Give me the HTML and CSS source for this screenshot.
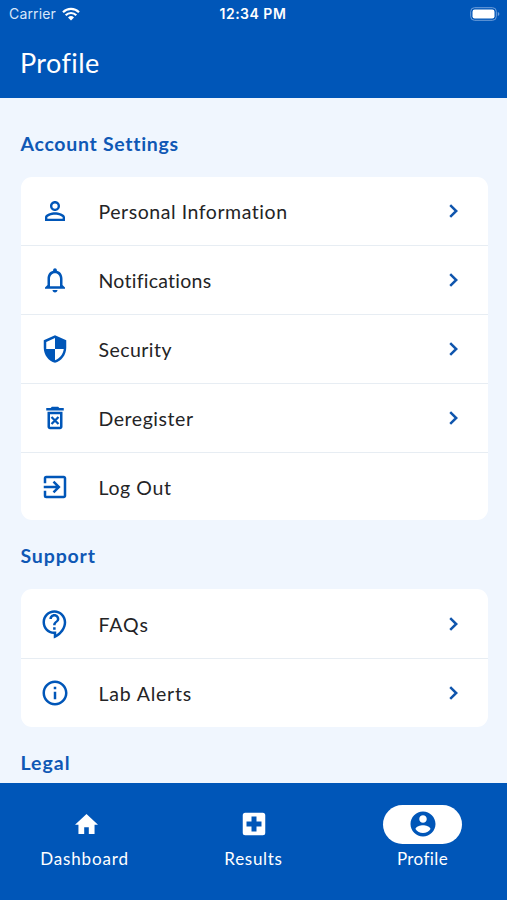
FILE: index.html
```html
<!DOCTYPE html>
<html lang="en">
<head>
<meta charset="utf-8">
<title>Profile</title>
<link rel="stylesheet" href="styles.css">
</head>
<body>
<svg class="defs" width="0" height="0">
  <symbol id="chevron" viewBox="0 0 12 16"><path d="M2.2 2.2 8.2 8l-6 5.8" fill="none" stroke="currentColor" stroke-width="2.5"/></symbol>
</svg>
<header class="header">
  <div class="status">
    <span class="carrier">Carrier</span>
    <svg class="wifi" viewBox="0 0 18 14"><path d="M9 13.6 12 10.5a4.3 4.3 0 0 0-6 0z" fill="currentColor"/><path d="M1 5.2a11.4 11.4 0 0 1 16 0M3.7 8.2a7.5 7.5 0 0 1 10.6 0" fill="none" stroke="currentColor" stroke-width="2.2"/></svg>
    <span class="time">12:34 PM</span>
    <svg class="battery" viewBox="0 0 30 14"><rect x=".7" y=".7" width="25.6" height="12.6" rx="3.8" fill="none" stroke="#6f9fda" stroke-width="1"/><rect x="2.5" y="2.5" width="22" height="9" rx="2.2" fill="#fff"/><path d="M27.8 5v4q1.6-.5 1.6-2t-1.6-2" fill="#6f9fda"/></svg>
  </div>
  <h1 class="title">Profile</h1>
</header>
<main class="content">
  <h2 class="section s-account">Account Settings</h2>
  <div class="card">
    <div class="row"><svg class="icon" viewBox="0 0 24 24"><path d="M12 5.9a2.1 2.1 0 1 1 0 4.2 2.1 2.1 0 0 1 0-4.2m0 9c2.97 0 6.1 1.46 6.1 2.1v1.1H5.9V17c0-.64 3.13-2.1 6.1-2.1M12 4C9.79 4 8 5.79 8 8s1.79 4 4 4 4-1.79 4-4-1.79-4-4-4zm0 9c-2.67 0-8 1.34-8 4v3h16v-3c0-2.66-5.33-4-8-4z"/></svg><span class="label l-personal">Personal Information</span><svg class="chev"><use href="#chevron"/></svg></div>
    <div class="row"><svg class="icon" viewBox="0 0 24 24"><path d="M12 22c1.1 0 2-.9 2-2h-4c0 1.1.9 2 2 2zm6-6v-5c0-3.07-1.63-5.64-4.5-6.32V4c0-.83-.67-1.5-1.5-1.5s-1.5.67-1.5 1.5v.68C7.64 5.36 6 7.92 6 11v5l-2 2v1h16v-1l-2-2zm-2 1H8v-6c0-2.48 1.51-4.5 4-4.5s4 2.02 4 4.5v6z"/></svg><span class="label l-notifications">Notifications</span><svg class="chev"><use href="#chevron"/></svg></div>
    <div class="row"><svg class="icon" viewBox="0 0 24 24"><path d="M12 1 3 5v6c0 5.55 3.84 10.74 9 12 5.16-1.26 9-6.45 9-12V5l-9-4zm0 10.99h7c-.53 4.12-3.28 7.79-7 8.94V12H5V6.3l7-3.11v8.8z"/></svg><span class="label l-security">Security</span><svg class="chev"><use href="#chevron"/></svg></div>
    <div class="row"><svg class="icon" viewBox="0 0 24 24"><path d="M6 19c0 1.1.9 2 2 2h8c1.1 0 2-.9 2-2V7H6v12zM8 9h8v10H8V9zm7.5-5-1-1h-5l-1 1H5v2h14V4z"/><path d="m9.2 11.2 5.6 5.6m0-5.6-5.6 5.6" fill="none" stroke="currentColor" stroke-width="1.8"/></svg><span class="label l-deregister">Deregister</span><svg class="chev"><use href="#chevron"/></svg></div>
    <div class="row"><svg class="icon" viewBox="0 0 24 24"><path d="M10.09 15.59 11.5 17l5-5-5-5-1.41 1.41L12.67 11H3v2h9.67l-2.58 2.59zM19 3H5a2 2 0 0 0-2 2v4h2V5h14v14H5v-4H3v4a2 2 0 0 0 2 2h14c1.1 0 2-.9 2-2V5c0-1.1-.9-2-2-2z"/></svg><span class="label l-logout">Log Out</span></div>
  </div>
  <h2 class="section s-support">Support</h2>
  <div class="card">
    <div class="row"><svg class="icon" viewBox="0 0 24 24"><path d="M11 23.59v-3.6c-5.01-.26-9-4.42-9-9.49C2 5.26 6.26 1 11.5 1S21 5.26 21 10.5c0 4.95-3.44 9.93-8.57 12.4l-1.43.69zM11.5 3C7.36 3 4 6.36 4 10.5S7.36 18 11.5 18H13v2.3c3.64-2.3 6-6.08 6-9.8C19 6.36 15.64 3 11.5 3zm-1 11.5h2v2h-2zm2-1.5h-2c0-3.25 3-3 3-5 0-1.1-.9-2-2-2s-2 .9-2 2h-2c0-2.21 1.79-4 4-4s4 1.79 4 4c0 2.5-3 2.75-3 5z"/></svg><span class="label l-faqs">FAQs</span><svg class="chev"><use href="#chevron"/></svg></div>
    <div class="row"><svg class="icon" viewBox="0 0 24 24"><path d="M11 7h2v2h-2zm0 4h2v6h-2zm1-9C6.48 2 2 6.48 2 12s4.48 10 10 10 10-4.48 10-10S17.52 2 12 2zm0 18c-4.41 0-8-3.59-8-8s3.59-8 8-8 8 3.59 8 8-3.59 8-8 8z"/></svg><span class="label l-alerts">Lab Alerts</span><svg class="chev"><use href="#chevron"/></svg></div>
  </div>
  <h2 class="section s-legal">Legal</h2>
</main>
<nav class="nav">
  <div class="tab"><span class="pill"><svg class="home" viewBox="2 3 20 17" preserveAspectRatio="none"><path d="M10 20v-6h4v6h5v-8h3L12 3 2 12h3v8z"/></svg></span><span class="tabtext t-dash">Dashboard</span></div>
  <div class="tab"><span class="pill"><svg class="icon" viewBox="0 0 24 24"><path d="M19 3H5a2 2 0 0 0-2 2v14a2 2 0 0 0 2 2h14a2 2 0 0 0 2-2V5a2 2 0 0 0-2-2zm-1 11h-4v4h-4v-4H6v-4h4V6h4v4h4v4z"/></svg></span><span class="tabtext t-results">Results</span></div>
  <div class="tab"><span class="pill active"><svg class="icon" viewBox="0 0 24 24"><path d="M12 2C6.48 2 2 6.48 2 12s4.48 10 10 10 10-4.48 10-10S17.52 2 12 2zm0 3c1.66 0 3 1.34 3 3s-1.34 3-3 3-3-1.34-3-3 1.34-3 3-3zm0 14.2c-2.5 0-4.71-1.28-6-3.22.03-1.99 4-3.08 6-3.08 1.99 0 5.97 1.09 6 3.08-1.29 1.94-3.5 3.22-6 3.22z"/></svg></span><span class="tabtext t-profile">Profile</span></div>
</nav>
</body>
</html>
```
FILE: styles.css
```css
* { box-sizing: border-box; }
body {
  margin: 0;
  height: 900px;
  overflow: hidden;
  display: flex;
  flex-direction: column;
  background: #f0f6fe;
  color: #242426;
  font-family: Lato, "Liberation Sans", sans-serif;
}
svg { display: block; fill: currentColor; flex: none; }
.defs { position: absolute; }
.header { height: 98px; flex: none; background: #0056b8; color: #fff; }
.status {
  height: 27px;
  padding: 0 7px 0 9px;
  display: grid;
  grid-template-columns: 52.5px 158px 1fr 30px;
  align-items: center;
  font: 14px/27px Inter, sans-serif;
}
.carrier { color: #d8e7fa; letter-spacing: .15px; }
.wifi { width: 18px; height: 14px; }
.time { font-weight: 600; letter-spacing: .5px; white-space: nowrap; }
.battery { width: 30px; height: 14px; }
.title { margin: 18px 0 0 20px; font-size: 27px; line-height: 36px; font-weight: 400; letter-spacing: .4px; }
.content { flex: 1; min-height: 0; overflow: hidden; padding: 31.5px 19.5px 0 20.5px; }
.section { margin: 0; height: 28px; font-size: 19.5px; line-height: 28px; font-weight: 700; color: #0f58b5; white-space: nowrap; }
.s-account { letter-spacing: .7px; }
.s-support { letter-spacing: .85px; }
.s-legal { letter-spacing: 1px; }
.card { margin: 19px 0 22px; border-radius: 11px; background: #fff; overflow: hidden; }
.row { height: 68.8px; display: flex; align-items: center; padding: 0 28px 0 19px; }
.row + .row { border-top: 1.5px solid #e7edf3; }
.icon { width: 30px; height: 30px; }
.row .icon { color: #0056b8; }
.label { margin: 2px 0 0 29px; font-size: 19.5px; line-height: 28px; white-space: nowrap; }
.l-personal { letter-spacing: .55px; }
.l-notifications { letter-spacing: .25px; }
.l-security { letter-spacing: .45px; }
.l-deregister { letter-spacing: .55px; }
.l-logout { letter-spacing: .6px; }
.l-faqs { letter-spacing: .9px; }
.l-alerts { letter-spacing: .8px; }
.chev { width: 12px; height: 16px; margin-left: auto; color: #0f55ad; }
.nav { height: 117px; flex: none; background: #0056b8; color: #fff; display: grid; grid-template-columns: repeat(3, 1fr); }
.tab { display: flex; flex-direction: column; align-items: center; padding-top: 21.5px; }
.pill { width: 79px; height: 39px; border-radius: 20px; display: flex; align-items: center; justify-content: center; }
.active { background: #fff; color: #0056b8; }
.home { width: 23px; height: 20.5px; margin-left: 3px; }
.tabtext { margin-top: 3px; font-size: 17px; line-height: 24px; white-space: nowrap; }
.t-dash { letter-spacing: .85px; }
.t-results { letter-spacing: .7px; }
.t-profile { letter-spacing: .4px; }
```
